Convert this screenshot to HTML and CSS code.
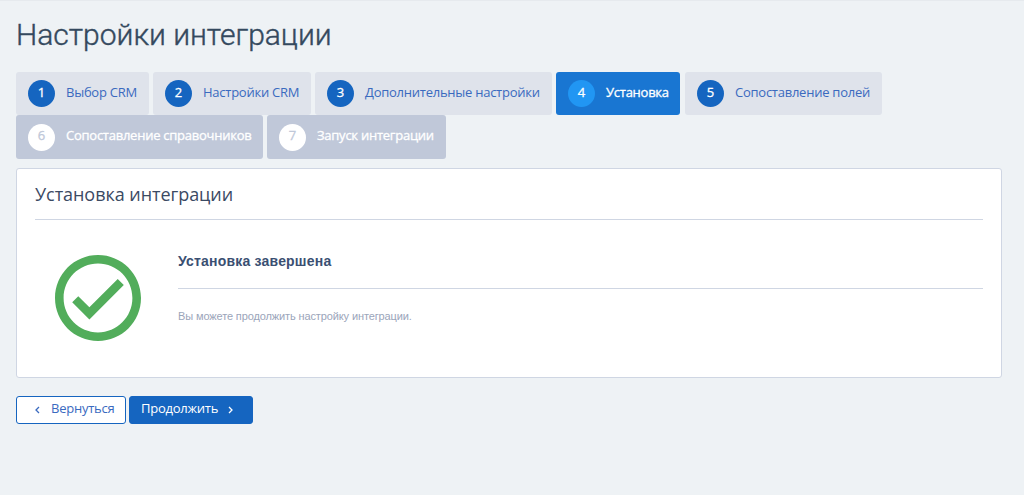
FILE: index.html
```html
<!DOCTYPE html>
<html lang="ru">
<head>
  <meta charset="UTF-8">
  <meta name="viewport" content="width=device-width, initial-scale=1.0">
  <title>Настройки интеграции</title>
  <link rel="stylesheet" href="styles.css">
</head>
<body>
  <main class="page">
    <h1 class="page-title">Настройки интеграции</h1>

    <!-- Шаги мастера -->
    <nav class="steps">
      <a href="#" class="step step-1"><span class="step-number">1</span><span class="step-text">Выбор CRM</span></a>
      <a href="#" class="step step-2"><span class="step-number">2</span><span class="step-text">Настройки CRM</span></a>
      <a href="#" class="step step-3"><span class="step-number">3</span><span class="step-text">Дополнительные настройки</span></a>
      <a href="#" class="step step-4 active"><span class="step-number">4</span><span class="step-text">Установка</span></a>
      <a href="#" class="step step-5"><span class="step-number">5</span><span class="step-text">Сопоставление полей</span></a>
      <a class="step step-6 disabled"><span class="step-number">6</span><span class="step-text">Сопоставление справочников</span></a>
      <a class="step step-7 disabled"><span class="step-number">7</span><span class="step-text">Запуск интеграции</span></a>
    </nav>

    <section class="panel">
      <h2 class="panel-title">Установка интеграции</h2>
      <div class="result">
        <svg class="result-icon" viewBox="2 2 20 20">
          <path d="M12 2C6.48 2 2 6.48 2 12s4.48 10 10 10 10-4.48 10-10S17.52 2 12 2zm0 18c-4.41 0-8-3.59-8-8s3.59-8 8-8 8 3.59 8 8-3.59 8-8 8z"/>
          <path d="M18 9l-1.41-1.42L10 14.17l-2.59-2.58L6 13l4 4z"/>
        </svg>
        <div class="result-body">
          <h3 class="result-title">Установка завершена</h3>
          <p class="result-text">Вы можете продолжить настройку интеграции.</p>
        </div>
      </div>
    </section>

    <!-- Кнопки навигации -->
    <div class="buttons">
      <button class="btn btn-back">
        <svg class="arrow" viewBox="0 0 5 8"><path d="M4 1L1 4l3 3"/></svg>
        <span>Вернуться</span>
      </button>
      <button class="btn btn-next">
        <span>Продолжить</span>
        <svg class="arrow" viewBox="0 0 5 8"><path d="M1 1l3 3-3 3"/></svg>
      </button>
    </div>
  </main>
</body>
</html>
```
FILE: styles.css
```css
* {
  box-sizing: border-box;
}

body {
  margin: 0;
  background-color: #eef2f5;
  border-top: 1px solid #e6eaee;
  font-family: "Open Sans", "Noto Sans", sans-serif;
  font-size: 13px;
  color: #3b4a63;
}

.page {
  padding: 11px 22px 0 16px;
}

.page-title {
  margin: 0;
  height: 60px;
  font-family: Roboto, "Liberation Sans", sans-serif;
  font-size: 30px;
  font-weight: 300;
  line-height: 46px;
  -webkit-text-stroke: 0.4px #34495e;
  color: #34495e;
}

/* Шаги */
.steps {
  display: flex;
  flex-wrap: wrap;
  column-gap: 4px;
}

.step {
  display: flex;
  height: 43px;
  padding: 8px 0 0 12px;
  background-color: #dfe3eb;
  border-radius: 3px;
  color: #3a6abf;
  text-decoration: none;
  white-space: nowrap;
}

.step-1 { width: 133px; }
.step-2 { width: 158px; }
.step-3 { width: 237px; }
.step-4 { width: 124px; }
.step-5 { width: 197px; margin-left: 1px; }
.step-6 { width: 247px; }
.step-7 { width: 179px; }

.step-number {
  width: 27px;
  height: 27px;
  margin-right: 11px;
  border-radius: 50%;
  background-color: #1565c0;
  color: #fff;
  line-height: 25px;
  text-align: center;
  -webkit-text-stroke: 0.3px currentColor;
}

.step-text {
  line-height: 25px;
  letter-spacing: -0.25px;
}

.step.active {
  background-color: #1976d2;
  color: #fff;
}

.step.active .step-text,
.step.disabled .step-text {
  -webkit-text-stroke: 0.3px currentColor;
}

.step.active .step-number {
  background-color: #2196f3;
}

.step.disabled {
  height: 44px;
  padding-top: 9px;
  background-color: #c0c8d9;
  color: #fff;
}

.step.disabled .step-number {
  background-color: #fff;
  color: #c0c8d9;
}

.step.disabled .step-text,
.step.disabled .step-number {
  line-height: 23px;
}

/* Панель */
.panel {
  height: 210px;
  margin-top: 9px;
  padding: 0 18px;
  background-color: #fff;
  border: 1px solid #cfd6e3;
  border-radius: 3px;
}

.panel-title {
  height: 51px;
  margin: 0;
  border-bottom: 1px solid #cfd6e3;
  font-size: 18px;
  font-weight: 400;
  line-height: 50px;
  letter-spacing: -0.05px;
}

.result {
  display: flex;
  padding-top: 35px;
}

.result-icon {
  width: 86px;
  height: 86px;
  margin: 0 37px 0 20px;
  fill: #52ad5b;
}

.result-body {
  flex: 1;
  font-family: "Liberation Sans", Arial, sans-serif;
}

.result-title {
  height: 34px;
  margin: 0;
  border-bottom: 1px solid #cfd6e3;
  font-size: 14px;
  line-height: 13px;
  letter-spacing: 0.2px;
  color: #3a4f72;
}

.result-text {
  margin: 20px 0 0;
  font-size: 11px;
  line-height: 14px;
  letter-spacing: -0.12px;
  color: #9ba5ba;
}

/* Кнопки */
.buttons {
  display: flex;
  gap: 3px;
  margin-top: 18px;
}

.btn {
  display: flex;
  align-items: center;
  height: 28px;
  border: 1px solid #1565c0;
  border-radius: 3px;
  font-family: inherit;
  font-size: 13px;
  line-height: 22px;
  letter-spacing: -0.25px;
  padding: 0 0 4px;
}

.btn-back {
  width: 110px;
  padding-left: 18px;
  background-color: #fff;
  color: #3a6abf;
}

.btn-next {
  width: 124px;
  padding-left: 11px;
  background-color: #1565c0;
  color: #fff;
}

.arrow {
  width: 5px;
  height: 8px;
  margin-top: 4px;
  fill: none;
  stroke: currentColor;
  stroke-width: 1.3;
}

.btn-back .arrow {
  margin-right: 11px;
}

.btn-next .arrow {
  margin-left: 10px;
}
```
